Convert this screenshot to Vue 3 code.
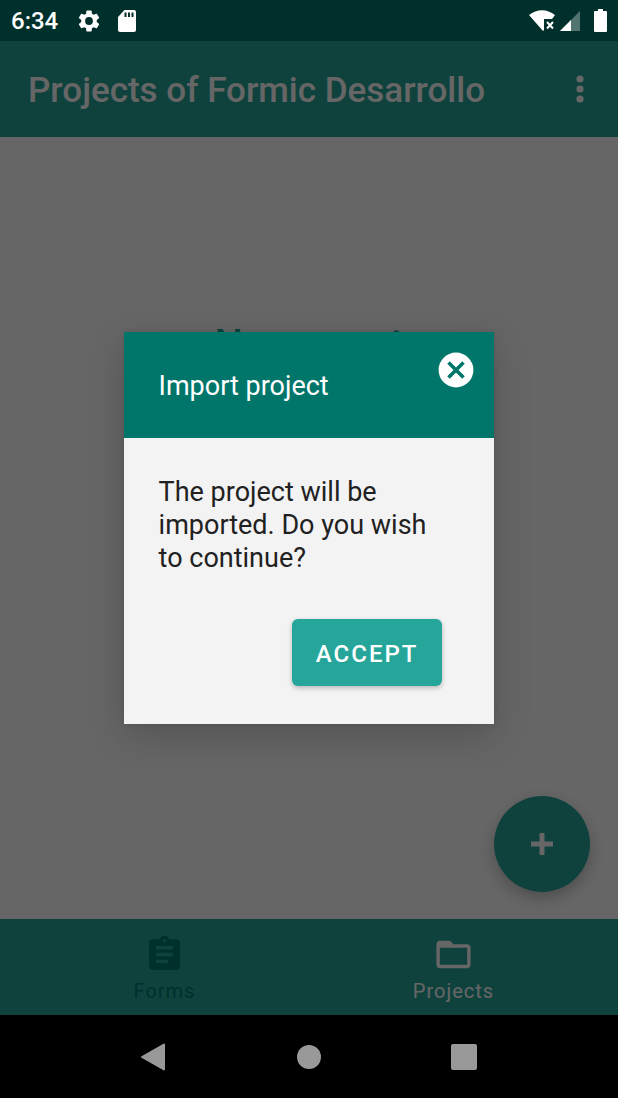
<script setup>
import { ref } from 'vue'

const open = ref(true)
const close = () => { open.value = false }
</script>

<template>
  <div class="screen">
    <header class="status">
      <span class="clock">6:34</span>
      <svg class="gear" width="26" height="26" viewBox="0 0 24 24" fill="#fff"><path d="M19.14 12.94c.04-.3.06-.61.06-.94s-.02-.64-.07-.94l2.03-1.58a.49.49 0 0 0 .12-.61l-1.92-3.32a.49.49 0 0 0-.59-.22l-2.39.96a7 7 0 0 0-1.62-.94l-.36-2.54a.48.48 0 0 0-.48-.41h-3.84a.47.47 0 0 0-.47.41l-.36 2.54c-.59.24-1.13.57-1.62.94l-2.39-.96a.48.48 0 0 0-.59.22L2.74 8.87a.47.47 0 0 0 .12.61l2.03 1.58c-.05.3-.09.63-.09.94s.02.64.07.94l-2.03 1.58a.49.49 0 0 0-.12.61l1.92 3.32c.12.22.37.29.59.22l2.39-.96c.5.38 1.03.7 1.62.94l.36 2.54c.05.24.24.41.48.41h3.84c.24 0 .44-.17.47-.41l.36-2.54a6.6 6.6 0 0 0 1.62-.94l2.39.96c.22.08.47 0 .59-.22l1.92-3.32a.47.47 0 0 0-.12-.61zM12 15.6a3.6 3.6 0 1 1 0-7.2 3.6 3.6 0 0 1 0 7.2z" /></svg>
      <svg width="18" height="22" viewBox="0 0 18 22"><path fill="#fff" d="M6.500 0H16a2 2 0 0 1 2 2v18a2 2 0 0 1-2 2H2a2 2 0 0 1-2-2V7z" /><path fill="#00302c" d="M6.500 2.500h2v4.500h-2zM10 2.500h2v4.500h-2zM13.500 2.500h2v4.500h-2z" /></svg>
      <span class="space"></span>
      <svg width="27" height="22" viewBox="0 0 27 22"><path fill="#fff" d="M0 5C8-1.500 18-1.500 26 5l-3 4h-8v11l-1 1z" /><path d="M18 12l6 6.500M24 12L18 18.500" stroke="#fff" stroke-width="2" /></svg>
      <svg class="signal" width="20" height="20" viewBox="0 0 20 20"><path fill="#527470" d="M20 0v20H0z" /><path fill="#fff" d="M11 9v11H0z" /></svg>
      <svg width="13" height="23" viewBox="0 0 13 23"><path fill="#fff" d="M4 0h5v2h3a1 1 0 0 1 1 1v19a1 1 0 0 1-1 1H1a1 1 0 0 1-1-1V3a1 1 0 0 1 1-1h3z" /></svg>
    </header>

    <div class="app">
      <div class="toolbar">
        <h1>Projects of Formic Desarrollo</h1>
        <button class="more" aria-label="More options">
          <svg width="8" height="28" viewBox="0 0 8 28" fill="#fff"><circle cx="4" cy="4" r="3.600" /><circle cx="4" cy="14" r="3.600" /><circle cx="4" cy="24" r="3.600" /></svg>
        </button>
      </div>

      <main class="content">
        <p class="empty">No current</p>
        <button class="fab" aria-label="Add project">
          <svg width="24" height="24" viewBox="0 0 24 24"><path d="M12 1v22M1 12h22" stroke="#fff" stroke-width="5" /></svg>
        </button>
      </main>

      <nav class="tabs">
        <a href="#forms" class="tab forms">
          <svg width="41" height="41" viewBox="0 0 24 24" fill="currentColor"><path d="M19 3h-4.180C14.400 1.840 13.300 1 12 1s-2.400.84-2.820 2H5c-1.100 0-2 .9-2 2v14c0 1.100.9 2 2 2h14c1.100 0 2-.9 2-2V5c0-1.100-.9-2-2-2zm-7 0c.55 0 1 .45 1 1s-.45 1-1 1-1-.45-1-1 .45-1 1-1zm2 14H7v-2h7v2zm3-4H7v-2h10v2zm0-4H7V7h10v2z" /></svg>
          <span>Forms</span>
        </a>
        <a href="#projects" class="tab">
          <svg width="41" height="41" viewBox="0 0 24 24" fill="currentColor"><path d="M20 6h-8l-2-2H4c-1.100 0-1.990.9-1.990 2L2 18c0 1.100.9 2 2 2h16c1.100 0 2-.9 2-2V8c0-1.100-.9-2-2-2zm0 12H4V8h16v10z" /></svg>
          <span>Projects</span>
        </a>
      </nav>

      <div v-if="open" class="scrim">
        <section class="dialog" role="dialog" aria-labelledby="dialog-title">
          <div class="dialog-head">
            <h2 id="dialog-title">Import project</h2>
            <button class="close" aria-label="Close" @click="close">
              <svg width="36" height="36" viewBox="0 0 36 36"><circle cx="18" cy="18" r="17.400" fill="#fff" /><path d="M10.500 10.500l15 15M25.500 10.500l-15 15" stroke="#00766b" stroke-width="3.600" /></svg>
            </button>
          </div>
          <div class="dialog-body">
            <p>The project will be imported. Do you wish to continue?</p>
            <button class="accept" @click="close">ACCEPT</button>
          </div>
        </section>
      </div>
    </div>

    <footer class="system">
      <button aria-label="Back"><svg width="28" height="28" viewBox="0 0 28 28"><path fill="#999" stroke="#999" stroke-width="2" stroke-linejoin="round" d="M2 14L24 1.500v25z" /></svg></button>
      <button aria-label="Home"><svg width="28" height="28" viewBox="0 0 28 28"><circle cx="14" cy="14" r="12" fill="#999" /></svg></button>
      <button aria-label="Recent apps"><svg width="28" height="28" viewBox="0 0 28 28"><rect x="1" y="1" width="26" height="26" rx="2" fill="#999" /></svg></button>
    </footer>
  </div>
</template>

<style scoped>
.screen {
  display: flex;
  flex-direction: column;
  min-height: 100vh;
  font-family: Roboto, "Liberation Sans", sans-serif;
}
.screen * { box-sizing: border-box; }
svg { display: block; flex: none; }
button {
  border: 0;
  padding: 0;
  background: none;
  font-family: inherit;
  cursor: pointer;
}
h1, h2, p { margin: 0; }
.status {
  display: flex;
  align-items: center;
  height: 41px;
  padding: 0 11px;
  background: #00302c;
  color: #fff;
}
.clock { font-size: 24px; font-weight: 500; line-height: 32px; }
.gear { margin: 0 16px 0 18px; }
.space { flex: 1; }
.signal { margin: 0 14px 0 4px; }
.app {
  position: relative;
  flex: 1;
  display: flex;
  flex-direction: column;
}
.toolbar {
  display: flex;
  align-items: center;
  justify-content: space-between;
  height: 96px;
  padding: 0 28px;
  background: #26a69a;
  color: #fff;
  box-shadow: 0 2px 6px rgba(0, 0, 0, 0.25);
}
h1 { padding-top: 4px; font-size: 35px; font-weight: 500; line-height: 40px; }
.more { padding: 6px; }
.content {
  flex: 1;
  display: flex;
  flex-direction: column;
  justify-content: space-between;
  padding: 184px 28px 27px;
  background: #fff;
}
.empty {
  text-align: center;
  font-size: 40px;
  font-weight: 500;
  line-height: 48px;
  color: #26a69a;
}
.fab {
  display: flex;
  align-items: center;
  justify-content: center;
  align-self: flex-end;
  width: 96px;
  height: 96px;
  border-radius: 50%;
  background: #26a69a;
  box-shadow: 0 6px 16px rgba(0, 0, 0, 0.25);
}
.tabs {
  display: flex;
  justify-content: center;
  height: 96px;
  padding: 0 20px;
  background: #26a69a;
}
.tab {
  flex: 1;
  display: flex;
  flex-direction: column;
  align-items: center;
  padding-top: 15px;
  color: #fff;
  text-decoration: none;
  font-size: 20px;
  line-height: 32px;
  letter-spacing: 1px;
}
.forms { color: #00796b; }
.scrim {
  position: absolute;
  inset: 0;
  display: flex;
  align-items: center;
  justify-content: center;
  background: rgba(0, 0, 0, 0.6);
}
.dialog {
  width: 60%;
  background: #f3f3f3;
  box-shadow: 0 12px 36px rgba(0, 0, 0, 0.18), 0 0 6px rgba(0, 0, 0, 0.08);
}
.dialog-head {
  display: flex;
  align-items: flex-start;
  justify-content: space-between;
  padding: 20px 20px 35px 35px;
  background: #00766b;
  color: #fff;
}
h2 { padding-top: 18px; font-size: 27px; font-weight: 400; line-height: 33px; }
.dialog-body {
  display: flex;
  flex-direction: column;
  padding: 38px 52px 38px 35px;
  color: #212121;
}
.dialog-body p { font-size: 27px; line-height: 33px; }
.accept {
  align-self: flex-end;
  margin-top: 44px;
  padding: 19px 24px 15px;
  border-radius: 6px;
  background: #26a69a;
  color: #fff;
  font-size: 24px;
  font-weight: 500;
  line-height: 33px;
  letter-spacing: 2px;
  box-shadow: 0 2px 5px rgba(0, 0, 0, 0.25);
}
.system {
  display: flex;
  justify-content: center;
  align-items: center;
  height: 83px;
  padding: 0 77px;
  background: #000;
}
.system button { flex: 1; display: flex; justify-content: center; }
</style>

<style>
body { margin: 0; background: #000; }
</style>
